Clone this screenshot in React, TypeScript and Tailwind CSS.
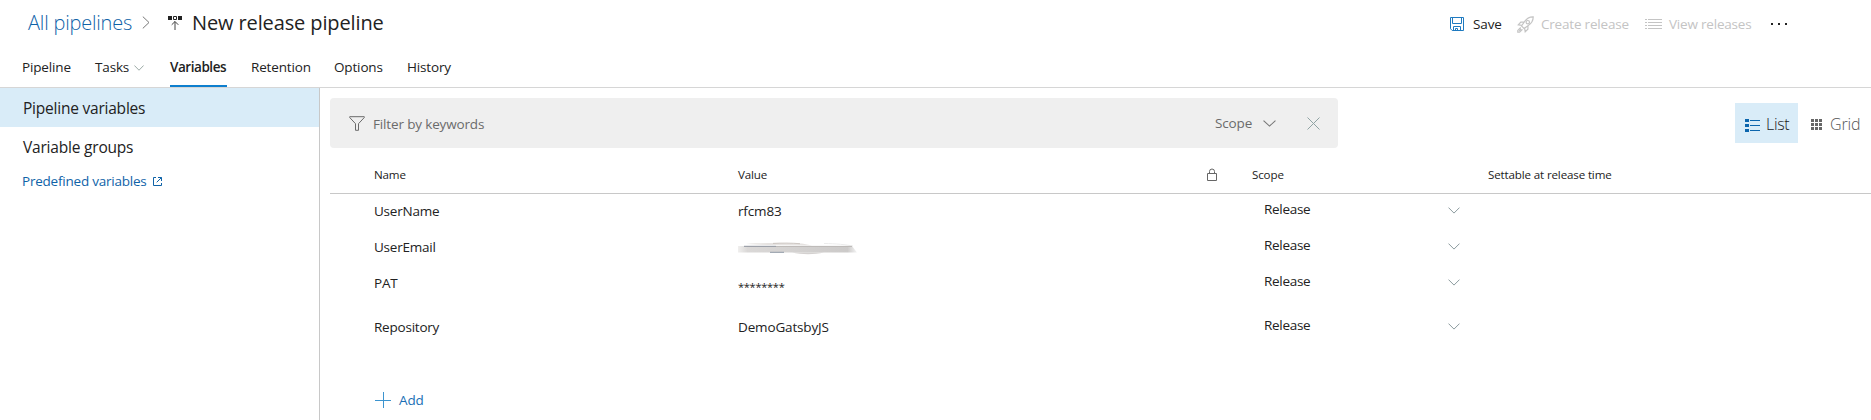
import React from "react";

const ChevronDown = ({ className }: { className: string }) => (
  <svg className={className} viewBox="0 0 12 7" fill="none" stroke="currentColor" preserveAspectRatio="none">
    <path d="M.5 .6 6 6.1 11.5 .6" />
  </svg>
);

const ReleaseIcon = () => (
  <svg className="ml-[18px] h-4 w-[14px] shrink-0" viewBox="0 0 14 16" fill="none">
    <path d="M0 1h4v4H0zM10 1h4v4h-4z" fill="#222" />
    <path d="M5.500 1.500h3v3h-3z" stroke="#222" />
    <path d="M7 6.500V15M3.700 9.800 7 6.500l3.300 3.300" stroke="#444" />
  </svg>
);

const SaveIcon = () => (
  <svg className="h-[14px] w-[14px] shrink-0 text-[#1f7ac0]" viewBox="0 0 14 14" fill="none" stroke="currentColor">
    <path d="M.5 .5h13v13H2.2L.5 11.8zM2.5 .5v6h9v-6M3.5 13.500v-4h7v4M5.500 13.500v-2h2v2" />
  </svg>
);

const RocketIcon = () => (
  <svg className="h-[17px] w-[17px] shrink-0" viewBox="0 0 17 17" fill="none" stroke="currentColor" strokeWidth="1.2">
    <path d="M16.2.8c-4-.1-6.800 1.700-8.900 5.200L4.500 10l2.500 2.500 4-2.800c3.500-2.100 5.300-4.900 5.200-8.900zM7.300 6l-3.500.1L1.300 8.800l3.500.6M11 9.700l-.1 3.500-2.700 2.500-.6-3.500" />
    <circle cx="10.800" cy="6.200" r="1.700" />
    <path d="M3.700 11.500.8 14.400v1.800h1.800l2.900-2.900M2.200 14.800l2-2" />
  </svg>
);

const LinesIcon = () => (
  <svg className="h-[12px] w-[17px] shrink-0" viewBox="0 0 17 12" stroke="currentColor">
    <path d="M0 1.500h2M0 4.500h2M0 7.500h2M0 10.500h2M3 1.500h14M3 4.500h14M3 7.500h14M3 10.500h14" />
  </svg>
);

const ExternalIcon = () => (
  <svg className="ml-[6px] h-[9px] w-[9px] shrink-0" viewBox="0 0 9 9" fill="none" stroke="currentColor">
    <path d="M3 .5H.5v8h8V6M5 .5h3.500V4M8.500 .5 3.700 5.300" />
  </svg>
);

const FilterIcon = () => (
  <svg className="h-[15px] w-[16px] shrink-0 text-[#6b6b6b]" viewBox="0 0 16 15" fill="none" stroke="currentColor">
    <path d="M.7 .7h14.600v.8L9.500 7.700v6.600h-3V7.700L.7 1.500z" />
  </svg>
);

const LockIcon = () => (
  <svg className="h-[13px] w-[10px] shrink-0 text-[#666]" viewBox="0 0 10 13" fill="none" stroke="currentColor">
    <path d="M.5 5.500h9v7h-9zM2.500 5.500v-2a2.500 2.500 0 0 1 5 0v2" />
  </svg>
);

const Scribble = () => (
  <svg className="mt-[12px] h-[14px] w-[120px]" viewBox="0 0 120 14" fill="none">
    <defs>
      <linearGradient id="smear" x1="0" x2="1" y1="0" y2="0">
        <stop offset="0" stopColor="#f0efee" />
        <stop offset=".08" stopColor="#dad8d7" />
        <stop offset=".92" stopColor="#cccac9" />
        <stop offset="1" stopColor="#f4f4f4" />
      </linearGradient>
      <filter id="soft" x="-5%" y="-20%" width="110%" height="140%">
        <feGaussianBlur stdDeviation=".6" />
      </filter>
    </defs>
    <g filter="url(#soft)">
      <path d="M0 4H114L119 10.500H0z" fill="url(#smear)" />
      <path d="M8 2C24 .8 44 .6 64 1.500L74 3.600 30 3z" fill="#e6e3e1" />
      <path d="M35 1.400C44 .9 54 1 62 1.700" stroke="#c4bdb8" strokeWidth=".8" />
      <path d="M86 1.500C98 1.600 108 2.700 115 4" stroke="#ececec" />
      <path d="M6 4.300H38" stroke="#8f949e" />
      <path d="M38 4.400H114" stroke="#bcb9b7" />
      <path d="M32 10.300h14" stroke="#929ba8" />
      <path d="M54 10.500C64 12.800 76 12.800 86 10.500z" fill="#d4d1d0" />
    </g>
  </svg>
);

const tabs = [
  { label: "Pipeline", box: "w-[73px]" },
  { label: "Tasks", box: "w-[75px]" },
  { label: "Variables", box: "w-[81px]" },
  { label: "Retention", box: "w-[83px]" },
  { label: "Options", box: "w-[73px]" },
  { label: "History", box: "w-[60px]" },
];

const rows = [
  { name: "UserName", value: "rfcm83", height: "h-[36px]" },
  { name: "UserEmail", value: null, height: "h-[36px]" },
  { name: "PAT", value: "********", height: "h-[44px]" },
  { name: "Repository", value: "DemoGatsbyJS", height: "h-[44px]" },
];

function Header() {
  return (
    <header className="h-[88px] border-b border-[#d6d6d6]">
      <div className="flex h-[45px] items-center whitespace-nowrap pl-[28px]">
        <a className="w-[104px] text-[20px] font-light tracking-[-0.200px] text-[#0f63a8]">All pipelines</a>
        <svg className="ml-[10px] h-[13px] w-[8px] shrink-0 text-[#777]" viewBox="0 0 8 13" fill="none" stroke="currentColor">
          <path d="M.8 .6 7 6.500 .8 12.400" />
        </svg>
        <ReleaseIcon />
        <h1 className="ml-[10px] text-[20px] tracking-[-0.120px]">New release pipeline</h1>
        <div className="ml-auto flex h-full w-[421px] items-center pt-[3px]">
          <SaveIcon />
          <span className="ml-[9px] w-[44px] tracking-[-0.100px]">Save</span>
          <div className="flex w-[128px] items-center text-[#c4c4c4]">
            <RocketIcon />
            <span className="ml-[7px] tracking-[-0.200px]">Create release</span>
          </div>
          <div className="flex w-[126px] items-center text-[#c4c4c4]">
            <LinesIcon />
            <span className="ml-[7px] tracking-[-0.200px]">View releases</span>
          </div>
          <svg className="h-[2px] w-[16px]" viewBox="0 0 16 2" fill="#222">
            <path d="M0 0h2v2H0zM7 0h2v2H7zM14 0h2v2h-2z" />
          </svg>
        </div>
      </div>
      <nav className="flex h-[42px] pl-[22px]">
        {tabs.map((t) => (
          <div key={t.label} className={t.box}>
            {t.label === "Variables" ? (
              <div className="flex h-full w-[57px] items-center border-b-2 border-[#0e7fce] pt-[4px] font-semibold tracking-[-0.450px]">
                {t.label}
              </div>
            ) : (
              <div className="flex h-full items-center pt-[2px]">
                {t.label}
                {t.label === "Tasks" && <ChevronDown className="ml-[5px] mt-[2px] h-[6px] w-[10px] text-[#8a9a95]" />}
              </div>
            )}
          </div>
        ))}
      </nav>
    </header>
  );
}

function Sidebar() {
  return (
    <aside className="w-[320px] shrink-0 border-r border-[#c8c8c8]">
      <div className="flex h-[39px] items-center bg-[#d9ecf8] pl-[23px] pt-[2px] text-[15.500px] tracking-[-0.220px]">Pipeline variables</div>
      <div className="flex h-[39px] items-center pl-[23px] pt-[2px] text-[15.500px] tracking-[-0.200px]">Variable groups</div>
      <a className="flex h-[30px] items-center pl-[22px] tracking-[-0.220px] text-[#0f63a8]">
        Predefined variables
        <ExternalIcon />
      </a>
    </aside>
  );
}

function FilterBar() {
  return (
    <div className="flex h-[50px] items-center">
      <div className="flex h-full w-[1008px] items-center rounded bg-[#efefef] pl-[19px] text-[#6b6b6b]">
        <FilterIcon />
        <span className="ml-[8px] w-[842px] pt-[2px]">Filter by keywords</span>
        <span className="w-[48px]">Scope</span>
        <ChevronDown className="h-[7px] w-[13px] text-[#777]" />
        <svg className="ml-[31px] h-[13px] w-[13px] text-[#8fa3a3]" viewBox="0 0 13 13" stroke="currentColor">
          <path d="M.5 .5l12 12M12.500 .5l-12 12" />
        </svg>
      </div>
      <div className="ml-[397px] flex h-10 w-[63px] items-center bg-[#d9ecf8] pl-[10px] text-[16px] font-light tracking-[-0.300px]">
        <svg className="mt-[4px] h-[13px] w-[15px] shrink-0" viewBox="0 0 15 13" fill="#0b65ad">
          <path d="M0 0h4v3H0zM0 5h4v3H0zM0 10h4v3H0zM5 1h10v1H5zM5 6h10v1H5zM5 11h10v1H5z" />
        </svg>
        <span className="ml-[6px] pt-[2px]">List</span>
      </div>
      <div className="flex items-center pl-[13px] text-[16px] font-light text-[#555]">
        <svg className="mt-[2px] h-[11px] w-[11px] shrink-0" viewBox="0 0 11 11" fill="#666">
          <path d="M0 0h3v3H0zM4 0h3v3H4zM8 0h3v3H8zM0 4h3v3H0zM4 4h3v3H4zM8 4h3v3H8zM0 8h3v3H0zM4 8h3v3H4zM8 8h3v3H8z" />
        </svg>
        <span className="ml-[8px] pt-[2px]">Grid</span>
      </div>
    </div>
  );
}

function VariableTable() {
  return (
    <div>
      <div className="flex h-[46px] items-center border-b border-[#c8c8c8] pl-[44px] pt-[8px] text-[11.600px]">
        <span className="w-[364px]">Name</span>
        <span className="w-[469px]">Value</span>
        <span className="w-[45px]"><LockIcon /></span>
        <span className="w-[236px]">Scope</span>
        <span>Settable at release time</span>
      </div>
      {rows.map((r) => (
        <div key={r.name} className={`flex items-start pl-[44px] leading-[34px] ${r.height}`}>
          <span className="w-[364px] tracking-[-0.220px]">{r.name}</span>
          <span className="w-[526px]">
            {r.value === null ? <Scribble /> : r.name === "PAT" ? <span className="block pt-[4px] text-[11px] tracking-[-0.250px]">{r.value}</span> : r.value}
          </span>
          <span className="w-[184px] leading-[30px] tracking-[-0.300px]">Release</span>
          <ChevronDown className="mt-[13px] h-[7px] w-[12px] text-[#8b9a9e]" />
        </div>
      ))}
      <div className="flex h-[92px] items-center pl-[45px] text-[#1a6fb5]">
        <svg className="h-[16px] w-[16px]" viewBox="0 0 16 16" stroke="#3c94cf">
          <path d="M8.500 0v16M0 8.500h16" />
        </svg>
        <span className="ml-[8px]">Add</span>
      </div>
    </div>
  );
}

export default function App() {
  return (
    <div className="h-[420px] w-[1871px] overflow-hidden whitespace-nowrap bg-white font-['Open_Sans',sans-serif] text-[13.500px] tracking-[-0.150px] text-[#222]">
      <Header />
      <div className="flex h-[332px]">
        <Sidebar />
        <main className="min-w-0 flex-1 pl-[10px] pt-[10px]">
          <FilterBar />
          <VariableTable />
        </main>
      </div>
    </div>
  );
}
